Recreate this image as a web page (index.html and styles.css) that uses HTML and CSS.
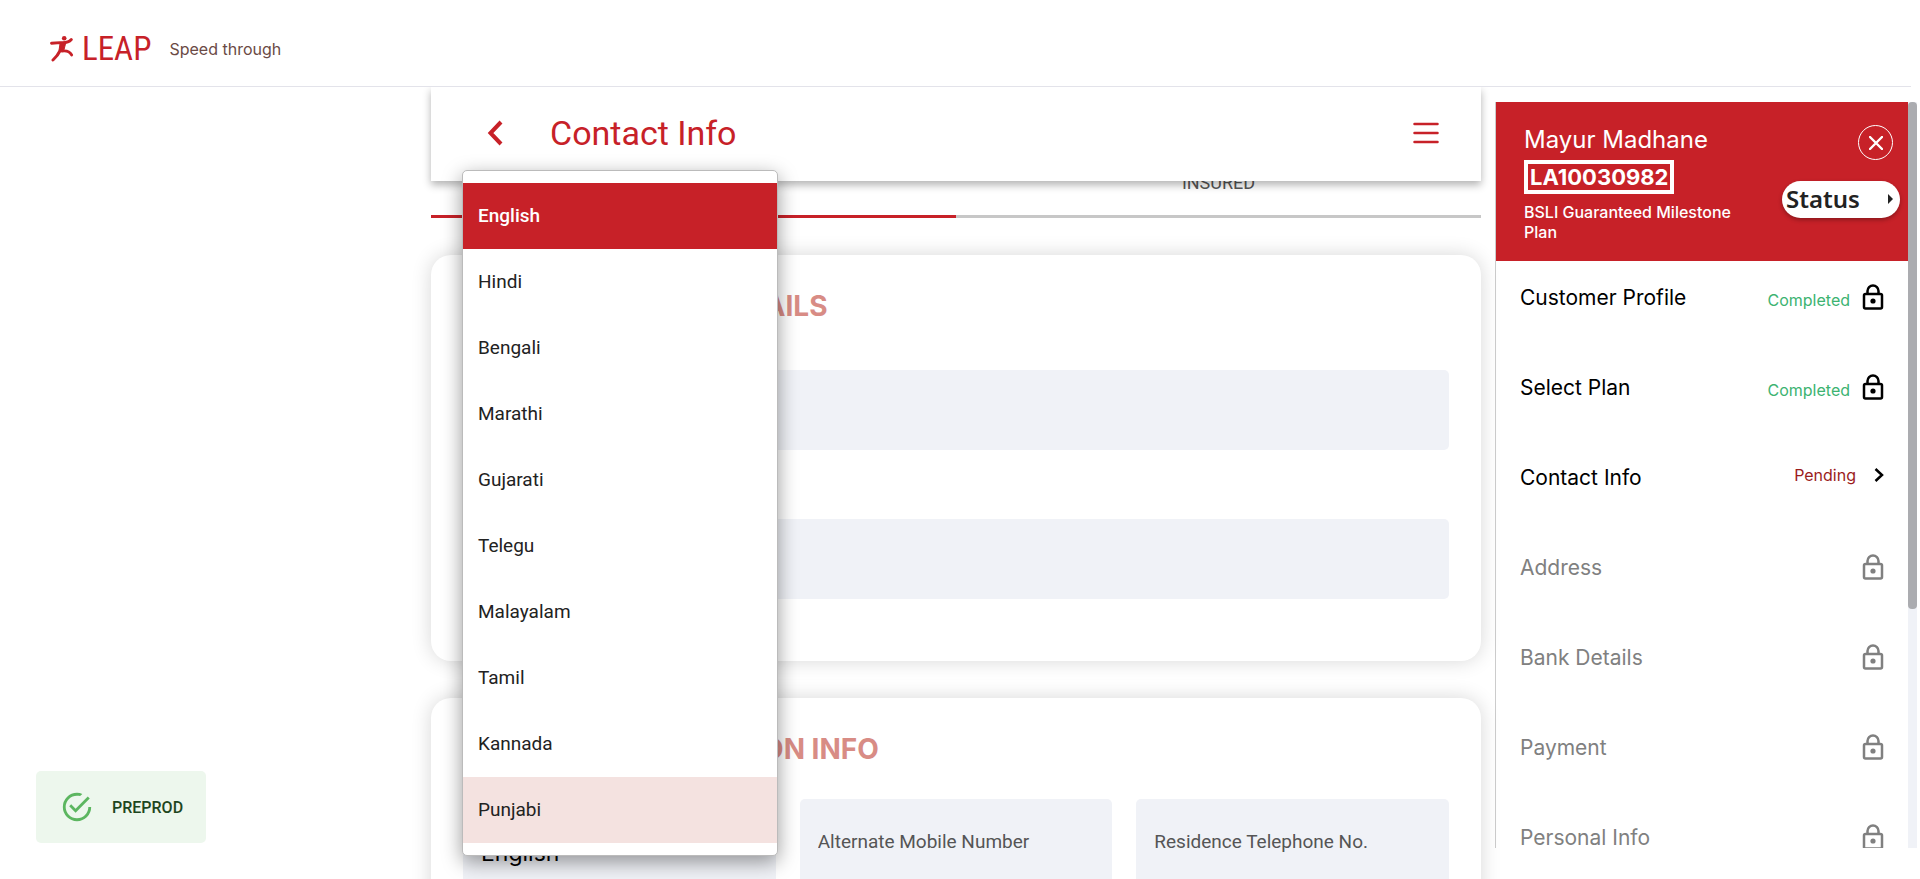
FILE: index.html
```html
<!DOCTYPE html>
<html lang="en">
<head>
<meta charset="utf-8">
<title>Contact Info</title>
<link rel="stylesheet" href="styles.css">
</head>
<body>
<svg width="0" height="0" class="sprite" aria-hidden="true">
  <symbol id="lock" viewBox="0 0 22 26">
    <rect x="2" y="10" width="18" height="14.500" rx="1.500" fill="none" stroke="currentColor" stroke-width="2.500"/>
    <path d="M5.500 10V7a5.500 5.500 0 0 1 11 0v3" fill="none" stroke="currentColor" stroke-width="2.500"/>
    <circle cx="11" cy="17" r="2.600" fill="currentColor"/>
  </symbol>
</svg>

<header class="topbar">
  <svg class="logo-mark" viewBox="0 0 24 27" aria-hidden="true">
    <circle cx="14.200" cy="3.300" r="2.300" fill="#c72128"/>
    <path d="M1.500 8.200 10 7.600Q18 8.400 21.300 4.500" fill="none" stroke="#c72128" stroke-width="2.900" stroke-linecap="round"/>
    <path d="M10.200 7.500 15.800 7.500 14 14.800 9 15.500Z" fill="#c72128" stroke="#c72128"/>
    <path d="M10.500 15Q7.500 21 3 25" fill="none" stroke="#c72128" stroke-width="3" stroke-linecap="round"/>
    <path d="M12 16Q19 15 21.700 20" fill="none" stroke="#c72128" stroke-width="2.800" stroke-linecap="round"/>
  </svg>
  <span class="logo-text">LEAP</span>
  <span class="tagline">Speed through</span>
</header>

<div class="layout">
  <div class="left">
    <div class="toast" role="status">
      <svg viewBox="0 0 24 24" aria-hidden="true"><path fill="#5cb660" d="M20,12A8,8 0 0,1 12,20A8,8 0 0,1 4,12A8,8 0 0,1 12,4C12.76,4 13.5,4.11 14.200,4.310L15.770,2.740C14.610,2.260 13.340,2 12,2A10,10 0 0,0 2,12A10,10 0 0,0 12,22A10,10 0 0,0 22,12M7.910,10.080L6.500,11.500L11,16L21,6L19.590,4.580L11,13.170L7.910,10.080Z"/></svg>
      <span>PREPROD</span>
    </div>
  </div>

  <main class="main">
    <div class="titlebar">
      <button class="icon-btn" type="button" aria-label="Back">
        <svg class="back" viewBox="0 0 16 26"><path d="M14 2 3.500 13 14 24" fill="none" stroke="#c72128" stroke-width="4"/></svg>
      </button>
      <h1>Contact Info</h1>
      <button class="icon-btn" type="button" aria-label="Menu">
        <svg class="burger" viewBox="0 0 26 22"><path d="M1.500 2h23M1.500 11h23M1.500 20h23" fill="none" stroke="#c72128" stroke-width="2.500" stroke-linecap="round"/></svg>
      </button>
    </div>

    <div class="tabs" role="tablist">
      <button class="tab tab-active" type="button" role="tab" aria-selected="true" aria-label="Proposer"></button>
      <button class="tab" type="button" role="tab" aria-selected="false">INSURED</button>
    </div>

    <section class="card">
      <h2>PERSONAL DETAILS</h2>
      <div class="stack">
        <input class="field" type="text" aria-label="Email">
        <input class="field" type="text" aria-label="Mobile number">
      </div>
    </section>

    <section class="card">
      <h2>COMMUNICATION INFO</h2>
      <div class="row">
        <button class="field field-lang" type="button" aria-haspopup="listbox" aria-expanded="true">English</button>
        <input class="field" type="text" aria-label="Alternate Mobile Number" placeholder="Alternate Mobile Number">
        <input class="field" type="text" aria-label="Residence Telephone No." placeholder="Residence Telephone No.">
      </div>
    </section>

    <ul class="menu" role="listbox" aria-label="Language">
      <li class="selected" role="option" aria-selected="true">English</li>
      <li role="option">Hindi</li>
      <li role="option">Bengali</li>
      <li role="option">Marathi</li>
      <li role="option">Gujarati</li>
      <li role="option">Telegu</li>
      <li role="option">Malayalam</li>
      <li role="option">Tamil</li>
      <li role="option">Kannada</li>
      <li class="active" role="option">Punjabi</li>
    </ul>
  </main>

  <aside class="side">
    <div class="side-body">
      <div class="side-head">
        <div class="who">
          <p class="name">Mayur Madhane</p>
          <p class="ref">LA10030982</p>
          <p class="plan">BSLI Guaranteed Milestone Plan</p>
        </div>
        <div class="side-actions">
          <button class="close" type="button" aria-label="Close">
            <svg viewBox="0 0 14 14"><path d="M1 1 13 13M13 1 1 13" stroke="#fff" stroke-width="2.400" stroke-linecap="round"/></svg>
          </button>
          <button class="status" type="button">Status
            <svg viewBox="0 0 5 10" aria-hidden="true"><path d="M0 0 5 5 0 10Z" fill="#222"/></svg>
          </button>
        </div>
      </div>
      <ul class="steps">
        <li><span>Customer Profile</span><span class="done">Completed</span><svg class="lock"><use href="#lock"/></svg></li>
        <li><span>Select Plan</span><span class="done">Completed</span><svg class="lock"><use href="#lock"/></svg></li>
        <li><span>Contact Info</span><span class="pending">Pending<svg class="next" viewBox="0 0 10 14"><path d="M1.500 1 8 7 1.500 13" fill="none" stroke="#000" stroke-width="2.500"/></svg></span></li>
        <li class="off"><span>Address</span><svg class="lock"><use href="#lock"/></svg></li>
        <li class="off"><span>Bank Details</span><svg class="lock"><use href="#lock"/></svg></li>
        <li class="off"><span>Payment</span><svg class="lock"><use href="#lock"/></svg></li>
        <li class="off"><span>Personal Info</span><svg class="lock"><use href="#lock"/></svg></li>
      </ul>
    </div>
    <div class="rail"><div class="thumb"></div></div>
  </aside>
</div>
</body>
</html>
```
FILE: styles.css
```css
* { box-sizing: border-box; }

body {
  margin: 0;
  height: 100vh;
  overflow: hidden;
  display: flex;
  flex-direction: column;
  background: #fff;
  color: #222;
  font-family: Roboto, "Liberation Sans", sans-serif;
  font-size: 19px;
}

h1, h2, p, ul { margin: 0; padding: 0; }
ul { list-style: none; }
button, input { font: inherit; border: 0; padding: 0; background: none; color: inherit; }
.sprite { position: absolute; }

.topbar {
  flex: none;
  display: flex;
  align-items: center;
  height: 87px;
  margin-right: 9px;
  padding: 11px 0 0 50px;
  border-bottom: 1px solid #e3e3ea;
}
.logo-mark { width: 24px; height: 27px; }
.logo-text {
  margin-left: 8px;
  color: #c72128;
  font-family: "Liberation Sans Narrow", "Roboto Condensed", Roboto, sans-serif;
  font-size: 33px;
  line-height: 40px;
}
.tagline {
  margin-left: 18px;
  color: #6b4a45;
  font-family: Inter, sans-serif;
  font-size: 16px;
}

.layout {
  flex: 1;
  min-height: 0;
  overflow: hidden;
  display: grid;
  grid-template-columns: 431fr 1050fr 436px;
  padding-right: 3px;
}

.left {
  display: flex;
  align-items: flex-end;
  padding: 0 0 36px 36px;
}
.toast {
  display: flex;
  align-items: center;
  gap: 18px;
  height: 72px;
  padding: 0 23px 0 24px;
  border-radius: 5px;
  background: #edf7ed;
  color: #1e4620;
  font-size: 16px;
  font-weight: 500;
}
.toast svg { width: 34px; height: 34px; }

.main { position: relative; min-width: 0; min-height: 0; }
.titlebar {
  position: relative;
  z-index: 1;
  display: flex;
  align-items: center;
  height: 94px;
  padding: 0 42px 2px 56px;
  background: #fff;
  box-shadow: 0 4px 8px rgba(0, 0, 0, .3);
}
.titlebar h1 {
  flex: 1;
  margin-left: 47px;
  color: #c72128;
  font-size: 34px;
  font-weight: 400;
  line-height: 40px;
}
.icon-btn { display: flex; }
.back { width: 16px; height: 26px; }
.burger { width: 26px; height: 22px; }

.tabs {
  display: grid;
  grid-template-columns: 1fr 1fr;
  margin-top: -10px;
}
.tab {
  height: 47px;
  padding-bottom: 20px;
  border-bottom: 3px solid #c7c7c7;
  color: #555;
  font-size: 18px;
  line-height: 24px;
}
.tab-active { border-color: #c72128; }

.card {
  margin-top: 37px;
  padding: 32px 32px 62px;
  border-radius: 20px;
  background: #fff;
  box-shadow: 0 0 20px rgba(0, 0, 0, .16);
}
.card h2 {
  padding-left: 90px;
  color: #d88c85;
  font-family: Inter, sans-serif;
  font-size: 28px;
  font-weight: 700;
  line-height: 38px;
}
.stack {
  display: grid;
  gap: 69px;
  margin-top: 45px;
}
.row {
  display: grid;
  grid-template-columns: repeat(3, 1fr);
  gap: 24px;
  margin-top: 31px;
}
.field {
  width: 100%;
  min-width: 0;
  height: 80px;
  padding: 0 18px;
  border-radius: 5px;
  background: #f0f2f7;
  text-align: left;
}
.field::placeholder { color: #555; opacity: 1; }
.row .field { height: 84px; }
.field-lang {
  padding-top: 24px;
  color: #000;
  font-family: Inter, sans-serif;
  font-size: 23px;
}

.menu {
  position: absolute;
  z-index: 2;
  top: 83px;
  left: 31px;
  width: 316px;
  padding: 12px 0;
  border: 1px solid #bbb;
  border-radius: 5px;
  background: #fff;
  box-shadow: 0 6px 20px rgba(0, 0, 0, .4);
}
.menu li {
  padding-left: 15px;
  line-height: 66px;
}
.menu .selected { background: #c72128; color: #fff; font-weight: 500; }
.menu .active { background: #f4e2e0; }

.side {
  display: flex;
  min-height: 0;
  margin: 15px 0 31px 14px;
  overflow: hidden;
  font-family: Inter, sans-serif;
}
.side-body {
  flex: 1;
  border-left: 1px solid #ccc;
}
.side-head {
  display: flex;
  justify-content: space-between;
  height: 159px;
  padding: 20px 8px 0 28px;
  background: #c72128;
  color: #fff;
}
.who { width: 230px; }
.name { font-size: 24px; line-height: 36px; }
.ref {
  width: max-content;
  margin-top: 2px;
  padding: 0 2px;
  border: 4px solid #fff;
  font-size: 22px;
  font-weight: 700;
  line-height: 26px;
}
.plan { margin-top: 8px; font-size: 16px; font-weight: 500; line-height: 20px; }
.side-actions {
  display: flex;
  flex-direction: column;
  align-items: flex-end;
  gap: 21px;
  padding-top: 3px;
}
.close {
  display: flex;
  align-items: center;
  justify-content: center;
  width: 35px;
  height: 35px;
  margin-right: 7px;
  border: 1px solid #fff;
  border-radius: 50%;
}
.close svg { width: 14px; height: 14px; }
.status {
  display: flex;
  align-items: center;
  justify-content: space-between;
  width: 118px;
  height: 37px;
  padding: 0 7px 2px 4px;
  border-radius: 19px;
  background: #fff;
  box-shadow: 0 2px 4px rgba(0, 0, 0, .3);
  color: #222;
  font-family: "Noto Sans", sans-serif;
  font-size: 24px;
  font-weight: 600;
}
.status svg { width: 5px; height: 10px; }

.steps li {
  display: flex;
  align-items: center;
  height: 90px;
  padding: 0 24px 18px;
  color: #000;
  font-size: 21px;
}
.steps li > span:first-child { flex: 1; }
.steps .off { color: #808080; }
.lock { width: 22px; height: 26px; margin-left: 12px; }
.next { width: 10px; height: 14px; margin-left: 18px; }
.steps .done { padding-top: 6px; color: #3cb371; font-size: 16px; }
.steps .pending {
  display: flex;
  align-items: center;
  padding-bottom: 4px;
  color: #9b1c1c;
  font-size: 16px;
}

.rail { flex: none; width: 9px; background: #f0f2f7; }
.thumb { height: 68%; border-radius: 4px; background: #abacb0; }
```
